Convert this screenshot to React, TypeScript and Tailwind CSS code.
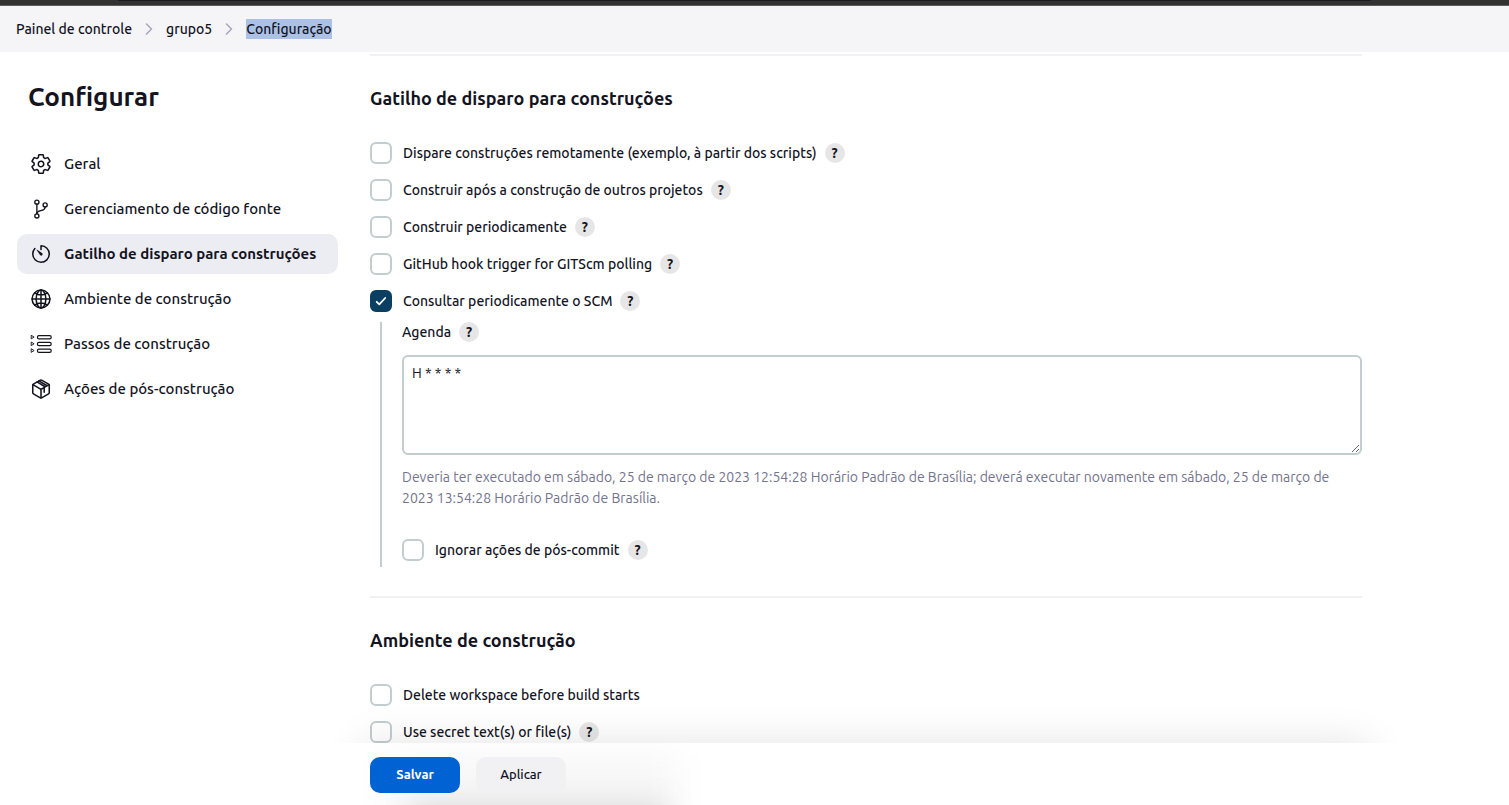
import React, { useState } from "react";
import type { ReactNode } from "react";

function Stroke({ children, width = 32 }: { children: ReactNode; width?: number }) {
  return (
    <svg viewBox="0 0 512 512" className="size-[22px] shrink-0" fill="none" stroke="currentColor" strokeWidth={width} strokeLinecap="round" strokeLinejoin="round" aria-hidden="true">
      {children}
    </svg>
  );
}

const icons = {
  gear: (
    <Stroke width={36}>
      <path d="M262.29 192.31a64 64 0 1057.4 57.4 64.13 64.13 0 00-57.4-57.4zM416.39 256a154.34 154.34 0 01-1.53 20.79l45.21 35.46a10.81 10.81 0 012.45 13.75l-42.77 74a10.81 10.81 0 01-13.14 4.59l-44.9-18.08a16.11 16.11 0 00-15.17 1.75A164.48 164.48 0 01325 400.8a15.94 15.94 0 00-8.82 12.14l-6.73 47.89a11.08 11.08 0 01-10.68 9.17h-85.54a11.11 11.11 0 01-10.69-8.87l-6.72-47.82a16.07 16.07 0 00-9-12.22 155.3 155.3 0 01-21.46-12.57 16 16 0 00-15.11-1.71l-44.89 18.07a10.81 10.81 0 01-13.14-4.58l-42.77-74a10.8 10.8 0 012.45-13.75l38.21-30a16.05 16.05 0 006-14.08c-.36-4.17-.58-8.33-.58-12.5s.21-8.27.58-12.35a16 16 0 00-6.07-13.94l-38.19-30A10.81 10.81 0 0149.48 186l42.77-74a10.81 10.81 0 0113.14-4.59l44.9 18.08a16.11 16.11 0 0015.17-1.75A164.48 164.48 0 01187 111.2a15.94 15.94 0 008.82-12.14l6.73-47.89A11.08 11.08 0 01213.23 42h85.54a11.11 11.11 0 0110.69 8.87l6.72 47.82a16.07 16.07 0 009 12.22 155.3 155.3 0 0121.46 12.57 16 16 0 0015.11 1.71l44.89-18.07a10.81 10.81 0 0113.14 4.58l42.77 74a10.8 10.8 0 01-2.45 13.75l-38.21 30a16.05 16.05 0 00-6.05 14.08c.33 4.14.55 8.3.55 12.47z" />
    </Stroke>
  ),
  branch: (
    <Stroke>
      <circle cx="160" cy="96" r="48" />
      <circle cx="160" cy="416" r="48" />
      <path d="M160 368V144" />
      <circle cx="352" cy="160" r="48" />
      <path d="M352 208c0 128-192 48-192 160" />
    </Stroke>
  ),
  timer: (
    <Stroke width={36}>
      <path d="M112.91 128A191.85 191.85 0 0064 254c-1.18 106.35 85.65 193.8 192 194 106.2.2 192-85.83 192-192 0-104.54-83.55-189.61-187.5-192a4.36 4.36 0 00-4.5 4.37V152" />
      <path d="M233.38 278.63l-79-113a8.13 8.13 0 0111.32-11.32l113 79a32.5 32.5 0 01-37.25 53.26 33.21 33.21 0 01-8.07-7.94z" fill="currentColor" stroke="none" />
    </Stroke>
  ),
  globe: (
    <Stroke width={36}>
      <circle cx="256" cy="256" r="208" />
      <path d="M256 48c-58.07 0-112.67 93.31-112.67 208S197.93 464 256 464s112.67-93.31 112.67-208S314.07 48 256 48z" />
      <path d="M117.33 117.33c38.24 27.15 86.38 43.34 138.67 43.34s100.43-16.19 138.67-43.34M394.67 394.67c-38.24-27.15-86.38-43.34-138.67-43.34s-100.43 16.19-138.67 43.34M256 48v416M464 256H48" />
    </Stroke>
  ),
  steps: (
    <Stroke width={28}>
      <rect x="172" y="62" width="322" height="74" rx="37" />
      <rect x="172" y="219" width="322" height="74" rx="37" />
      <rect x="172" y="376" width="322" height="74" rx="37" />
      <path d="M28 62v74l60-37zM28 219v74l60-37zM28 376v74l60-37z" strokeWidth="22" />
    </Stroke>
  ),
  box: (
    <Stroke width={36}>
      <path d="M448 341.37V170.61A32 32 0 00432.11 143l-152-88.46a47.94 47.94 0 00-48.24 0L79.89 143A32 32 0 0064 170.61v170.76A32 32 0 0079.89 369l152 88.46a48 48 0 0048.24 0l152-88.46A32 32 0 00448 341.37z" />
      <path d="M69 153.99l187 110 187-110M256 463.99v-200M330 222V330M163 92l187 112M208 68l190 112" />
    </Stroke>
  ),
};

function Help() {
  return (
    <button type="button" aria-label="Ajuda" className="flex size-5 shrink-0 items-center justify-center rounded-full bg-[#e6e6e6] text-sm leading-5 font-bold">
      ?
    </button>
  );
}

function Check({ id, label, help = false, initial = false }: { id: string; label: string; help?: boolean; initial?: boolean }) {
  const [on, setOn] = useState(initial);
  return (
    <div className="flex items-center">
      <span className="relative flex">
        <input
          id={id}
          type="checkbox"
          checked={on}
          onChange={() => setOn(!on)}
          className="size-[22px] appearance-none rounded-md border-2 border-[#c2cdd0] bg-transparent checked:border-[#0b3f62] checked:bg-[#0b3f62]"
        />
        {on && (
          <svg viewBox="0 0 22 22" className="pointer-events-none absolute inset-0 size-[22px]" fill="none" stroke="white" strokeWidth="1.8" strokeLinecap="round" strokeLinejoin="round" aria-hidden="true">
            <path d="M6.7 11.8l2.6 2.6L15.2 8" />
          </svg>
        )}
      </span>
      <label htmlFor={id} className="mr-2 ml-[11px] text-sm leading-[22px] font-medium">{label}</label>
      {help && <Help />}
    </div>
  );
}

const nav = [
  { label: "Geral", icon: icons.gear },
  { label: "Gerenciamento de código fonte", icon: icons.branch },
  { label: "Gatilho de disparo para construções", icon: icons.timer, active: true },
  { label: "Ambiente de construção", icon: icons.globe },
  { label: "Passos de construção", icon: icons.steps },
  { label: "Ações de pós-construção", icon: icons.box },
];

function Chevron() {
  return (
    <svg viewBox="0 0 10 12" className="mx-3 h-3 w-2.5" fill="none" stroke="#a9a8bd" strokeWidth="1.6" strokeLinecap="round" strokeLinejoin="round" aria-hidden="true">
      <path d="M2.5 1l5 5-5 5" />
    </svg>
  );
}

export default function App() {
  const [schedule, setSchedule] = useState("H * * * *");
  return (
    <div className="flex min-h-screen flex-col bg-white font-['Ubuntu','Noto_Sans',sans-serif] text-[#14141f]">
      <div className="h-1.5 border-b border-[#5d5b5b] bg-[#333233] pr-[138px] pl-[118px]">
        <div className="h-px bg-[#1c1b20]" />
      </div>
      <nav aria-label="Trilha" className="flex h-[46px] items-center bg-[#f5f5f8] px-4 text-sm leading-5 font-medium">
        <a href="#painel">Painel de controle</a>
        <Chevron />
        <a href="#grupo5">grupo5</a>
        <Chevron />
        <a href="#configuracao" className="bg-[#abc2e6]">Configuração</a>
      </nav>

      <div className="flex grow">
        <aside className="w-[354px] shrink-0 pr-4 pl-[17px]">
          <h1 className="mt-7 ml-[11px] text-[26px] leading-[34px] font-bold">Configurar</h1>
          <ul className="mt-[30px] flex flex-col gap-[5px]">
            {nav.map((item) => (
              <li key={item.label}>
                <a href="#secao" className={item.active ? "flex h-10 items-center gap-3 rounded-[10px] bg-[#ecedf2] px-[13px] text-[15px] font-bold" : "flex h-10 items-center gap-3 rounded-[10px] px-[13px] text-[15px] font-medium"}>
                  {item.icon}
                  {item.label}
                </a>
              </li>
            ))}
          </ul>
        </aside>

        <main className="flex min-w-0 grow flex-col pr-[147px] pl-4">
          <section className="mt-0.5 border-t-2 border-[#f1f1f4] pt-[30px]">
            <h2 className="text-lg leading-6 font-bold">Gatilho de disparo para construções</h2>
            <div className="mt-8 flex flex-col gap-[15px]">
              <Check id="remote" label="Dispare construções remotamente (exemplo, à partir dos scripts)" help />
              <Check id="after" label="Construir após a construção de outros projetos" help />
              <Check id="periodic" label="Construir periodicamente" help />
              <Check id="hook" label="GitHub hook trigger for GITScm polling" help />
              <Check id="scm" label="Consultar periodicamente o SCM" help initial />
            </div>
            <div className="mt-2.5 ml-2.5 border-l-2 border-[#c2cdd0] pb-1.5 pl-5">
              <div className="flex items-center gap-2">
                <label htmlFor="agenda" className="text-sm leading-5 font-medium">Agenda</label>
                <Help />
              </div>
              <textarea
                id="agenda"
                value={schedule}
                onChange={(e) => setSchedule(e.target.value)}
                className="mt-[13px] block h-[100px] w-full rounded-md border-2 border-[#c2cdd0] px-2 py-1.5 text-sm leading-5"
              />
              <p className="mt-3 mb-[30px] text-sm leading-[21px] text-[#73738c]">
                Deveria ter executado em sábado, 25 de março de 2023 12:54:28 Horário Padrão de Brasília; deverá executar novamente em sábado, 25 de março de 2023 13:54:28 Horário Padrão de Brasília.
              </p>
              <Check id="ignore" label="Ignorar ações de pós-commit" help />
            </div>
          </section>
          <section className="mt-[29px] border-t-2 border-[#f1f1f4] pt-[30px]">
            <h2 className="text-lg leading-6 font-bold">Ambiente de construção</h2>
            <div className="mt-8 flex flex-col gap-[15px]">
              <Check id="delete" label="Delete workspace before build starts" />
              <Check id="secret" label="Use secret text(s) or file(s)" help />
            </div>
          </section>
        </main>
      </div>

      <footer className="sticky bottom-0 ml-[354px] pr-[147px] pl-4">
        <div className="pointer-events-none absolute right-[107px] bottom-full -left-6 h-10 overflow-hidden">
          <div className="mx-8 mt-10 h-16 bg-white shadow-[0_0_40px_rgba(0,0,0,0.11)]" />
        </div>
        <div className="relative -ml-1.5 flex gap-4 overflow-hidden bg-white pt-3.5 pb-3 pl-1.5">
          <div className="pointer-events-none absolute top-3 left-6 h-24 w-72 bg-black/[0.03] blur-[16px]" />
          <div className="pointer-events-none absolute top-[64px] left-12 h-12 w-64 bg-black/[0.13] blur-[16px]" />
          <button type="button" className="relative h-9 w-[90px] rounded-[10px] bg-[#0062d3] text-[13px] font-bold text-white">Salvar</button>
          <button type="button" className="relative h-9 w-[90px] rounded-[10px] bg-[#f1f1f4] text-[13px] font-medium">Aplicar</button>
        </div>
      </footer>
    </div>
  );
}
